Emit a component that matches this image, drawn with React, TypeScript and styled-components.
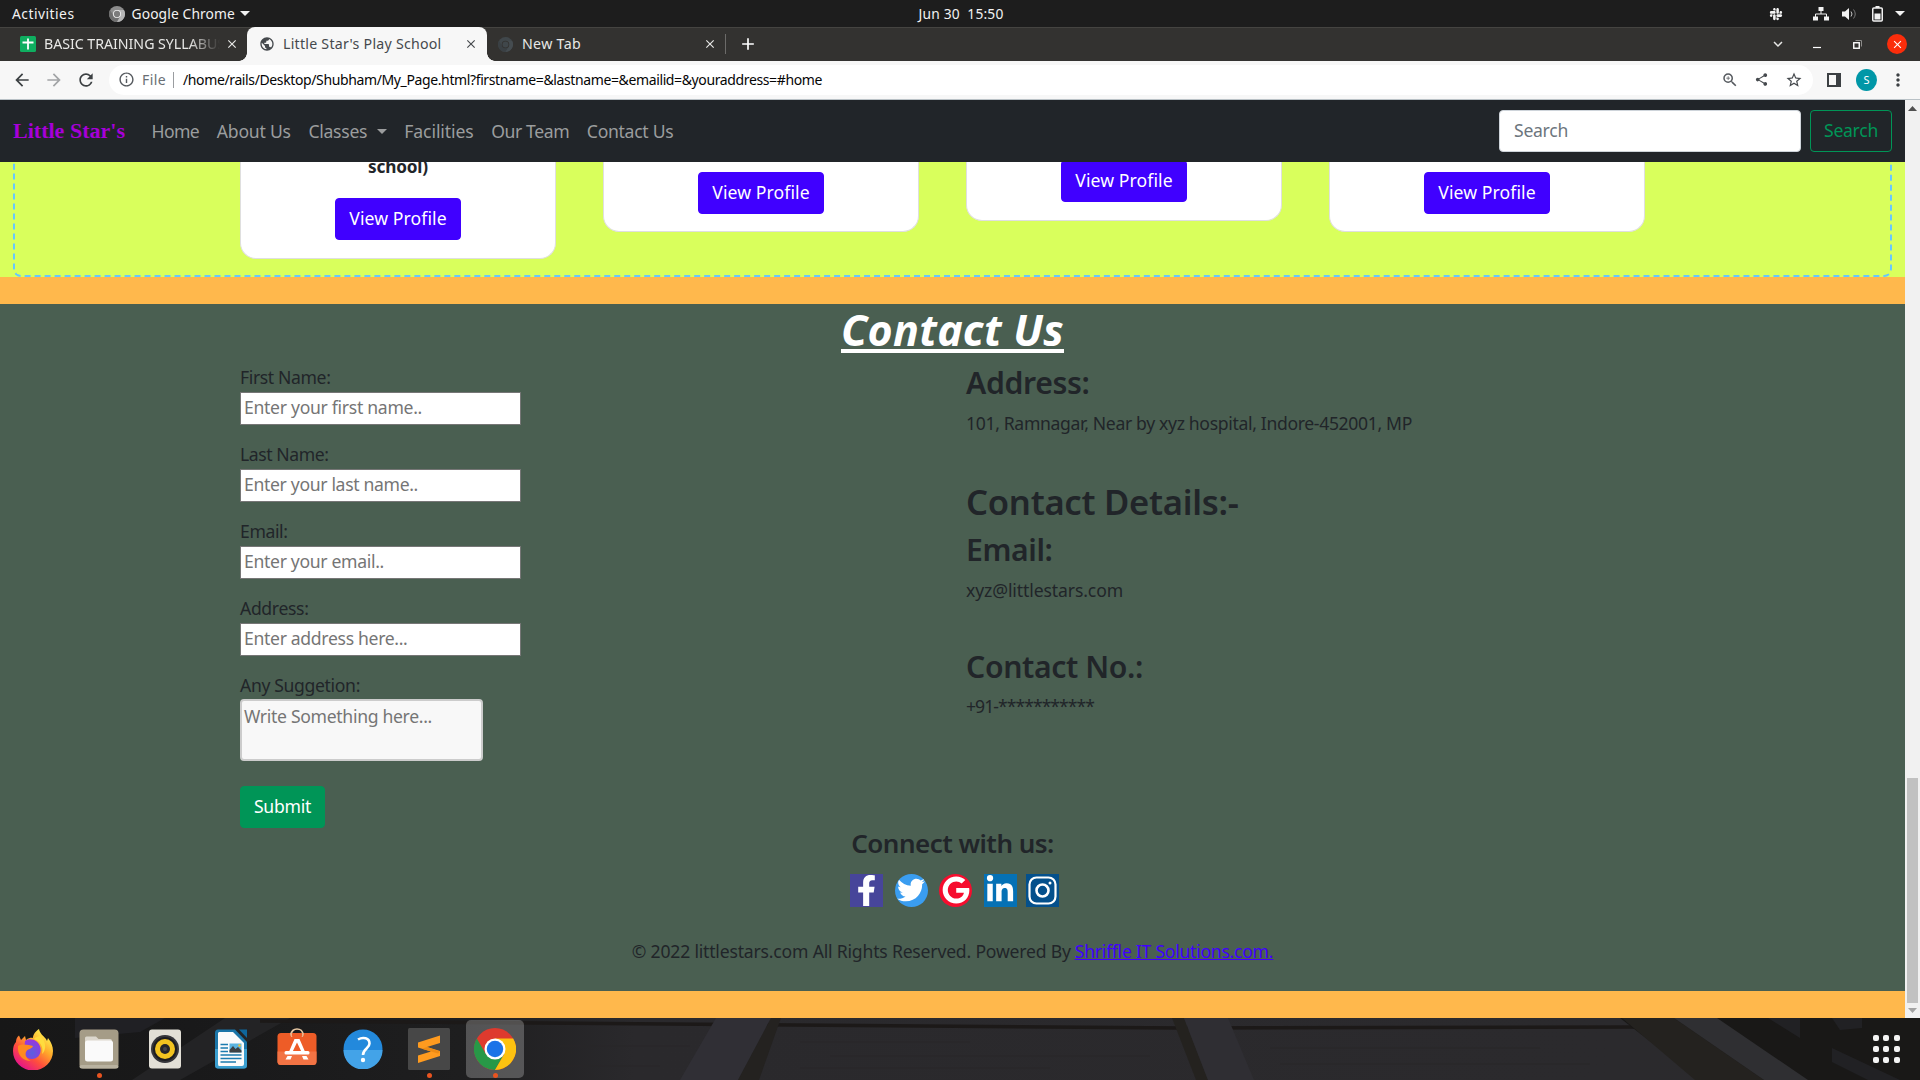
import React from "react";
import styled, { createGlobalStyle, css } from "styled-components";
import { FaFacebookF, FaTwitter, FaGoogle, FaLinkedinIn, FaSlack } from "react-icons/fa";
import { MdArrowBack, MdArrowForward, MdRefresh, MdInfoOutline, MdZoomIn, MdShare, MdStarBorder, MdMoreVert, MdPublic, MdClose, MdAdd, MdExpandMore } from "react-icons/md";

const SANS = '"Noto Sans", "Open Sans", sans-serif';
const SERIF = '"Liberation Serif", serif';

const GlobalStyle = createGlobalStyle`
  *, *::before, *::after { box-sizing: border-box; }
  html, body { margin: 0; padding: 0; overflow: hidden; }
  body { width: 1920px; height: 1080px; font-family: ${SANS}; }
  svg { display: block; flex: none; }
`;

/* ---------- text that keeps a set measure ---------- */

type Face = { size: number; weight?: number; italic?: boolean; family?: string };

const BODY = 17.6;

const pen = document.createElement("canvas").getContext("2d")!;

function tracking(text: string, width: number, { size, weight = 400, italic, family = SANS }: Face) {
  pen.font = `${italic ? "italic " : ""}${weight} ${size}px ${family}`;
  return (width - pen.measureText(text).width) / text.length;
}

const Glyphs = styled.span<{ $face: Face; $track: number }>`
  white-space: pre;
  font-family: ${(p) => p.$face.family ?? SANS};
  font-size: ${(p) => p.$face.size}px;
  font-weight: ${(p) => p.$face.weight ?? 400};
  font-style: ${(p) => (p.$face.italic ? "italic" : "normal")};
  letter-spacing: ${(p) => p.$track.toFixed(3)}px;
`;

function Text({ children, w, ...face }: { children: string; w: number } & Face) {
  return (
    <Glyphs $face={face} $track={tracking(children, w, face)}>
      {children}
    </Glyphs>
  );
}

/* ---------- desktop top bar ---------- */

const Desktop = styled.div`
  display: flex;
  flex-direction: column;
  width: 1920px;
  height: 1080px;
  overflow: hidden;
`;

const TopBar = styled.div`
  display: grid;
  grid-template-columns: 1fr auto 1fr;
  align-items: center;
  height: 27px;
  flex: none;
  padding-left: 2px;
  background: #1d1d1d;
  color: #f2f2f2;
  line-height: 26px;
`;

const TopLeft = styled.div`
  display: flex;
  align-items: center;
  padding-left: 10px;
`;

const TopRight = styled.div`
  display: flex;
  align-items: center;
  justify-content: flex-end;
  padding-right: 15px;
`;

const Push = styled.div<{ $l?: number; $r?: number }>`
  display: flex;
  align-items: center;
  flex: none;
  margin-left: ${(p) => p.$l ?? 0}px;
  margin-right: ${(p) => p.$r ?? 0}px;
`;

const Caret = styled.i<{ $size?: number }>`
  width: 0;
  height: 0;
  border: ${(p) => p.$size ?? 5}px solid transparent;
  border-top-color: currentColor;
  border-bottom: 0;
`;

/* ---------- browser chrome ---------- */

const TabStrip = styled.div`
  display: flex;
  height: 34px;
  flex: none;
  background: #333230;
  box-shadow: inset 0 1px #454441;
  color: #e8e8e6;
  line-height: 32px;
`;

const Tab = styled.div<{ $w: number; $active?: boolean }>`
  display: flex;
  align-items: center;
  flex: none;
  width: ${(p) => p.$w}px;
  ${(p) =>
    p.$active &&
    css`
      position: relative;
      background: #f7f7f7;
      color: #45494d;
      border-radius: 8px 8px 0 0;
      &::before,
      &::after {
        content: "";
        position: absolute;
        bottom: 0;
        width: 8px;
        height: 8px;
      }
      &::before {
        left: -8px;
        background: radial-gradient(circle at 0 0, transparent 7.5px, #f7f7f7 8px);
      }
      &::after {
        right: -8px;
        background: radial-gradient(circle at 100% 0, transparent 7.5px, #f7f7f7 8px);
      }
    `}
`;

const TabTitle = styled.div<{ $faded?: boolean }>`
  height: 34px;
  ${(p) =>
    p.$faded &&
    css`
      width: 176px;
      overflow: hidden;
      mask-image: linear-gradient(90deg, #000 145px, transparent 176px);
    `}
`;

const TabRule = styled.div`
  width: 1px;
  height: 20px;
  background: #6c6b69;
`;

const WindowButtons = styled.div`
  display: flex;
  align-items: center;
  margin-left: auto;
  padding-right: 13px;
`;

const CloseWindow = styled.div`
  display: grid;
  place-items: center;
  width: 20px;
  height: 20px;
  border-radius: 50%;
  background: #fb2d0b;
  color: #fff;
`;

const Toolbar = styled.div`
  display: flex;
  align-items: center;
  height: 39px;
  flex: none;
  padding: 0 12px 1px;
  background: #f7f7f7;
  border-bottom: 1px solid #b9c1c6;
  color: #3c4043;
`;

const Omnibox = styled.div`
  display: flex;
  align-items: center;
  width: 1704px;
  height: 30px;
  margin-left: 13px;
  padding: 0 10px 0 9px;
  border-radius: 15px;
  background: #fff;
  color: #050505;
  line-height: 30px;
`;

const Scheme = styled.span`
  margin-left: 7px;
  color: #6a6f75;
`;

const OmniRule = styled.div`
  width: 1px;
  height: 16px;
  margin: 0 9px 0 7px;
  background: #9a9da0;
`;

const Avatar = styled.div`
  display: grid;
  place-items: center;
  width: 22px;
  height: 22px;
  border-radius: 50%;
  background: #0097a7;
  color: #fff;
  font: 11px/22px ${SANS};
`;

/* ---------- page ---------- */

const Viewport = styled.div`
  display: flex;
  height: 918px;
  flex: none;
`;

const Page = styled.main`
  display: flex;
  flex-direction: column;
  width: 1905px;
  background: #ffb84c;
  color: #212529;
  line-height: 27px;
`;

const NavBar = styled.nav`
  display: flex;
  align-items: center;
  height: 62px;
  flex: none;
  padding: 0 13px;
  background: #212529;
  color: #9b9d9e;
`;

const Brand = styled.a`
  height: 27px;
  margin-right: 26.5px;
  color: #a600d8;
  line-height: 26px;
`;

const NavLink = styled.a`
  display: flex;
  align-items: center;
  gap: 9.5px;
  margin-right: 17.6px;
  line-height: 25px;
`;

const SearchField = styled.input<{ $track: number }>`
  width: 302px;
  height: 42px;
  margin-left: auto;
  padding: 0 13px 2px 14px;
  border: 1px solid #ced4da;
  border-radius: 4px;
  background: #fff;
  font: ${BODY}px ${SANS};
  letter-spacing: ${(p) => p.$track}px;
  &::placeholder {
    color: #6c757d;
    opacity: 1;
  }
`;

const Button = styled.button<{ $w: number; $tone: "blue" | "green" | "outline" }>`
  display: flex;
  align-items: center;
  justify-content: center;
  flex: none;
  width: ${(p) => p.$w}px;
  height: 42px;
  padding: 0 0 2px;
  border: 1px solid ${(p) => (p.$tone === "blue" ? "#4000ff" : "#009557")};
  border-radius: 4px;
  background: ${(p) => ({ blue: "#4000ff", green: "#009557", outline: "transparent" })[p.$tone]};
  color: ${(p) => (p.$tone === "outline" ? "#009557" : "#fff")};
`;

const Team = styled.section`
  height: 115px;
  flex: none;
  padding: 0 13px;
  overflow: hidden;
  background: #d9ff5c;
`;

const TeamFrame = styled.div`
  display: flex;
  gap: 47px;
  height: 315px;
  margin-top: -200px;
  padding: 198px 0 0 225px;
  border: 2px dashed #66c7ff;
  border-radius: 8px;
`;

const ProfileCard = styled.article<{ $h: number; $pad: number }>`
  display: flex;
  flex-direction: column;
  align-items: center;
  justify-content: flex-end;
  flex: none;
  width: 316px;
  height: ${(p) => p.$h}px;
  padding-bottom: ${(p) => p.$pad}px;
  border: 1px solid #dfdfdf;
  border-top: 0;
  border-radius: 0 0 16px 16px;
  background: #fff;
`;

const CardTitle = styled.div`
  height: 26px;
  margin-bottom: 19px;
`;

const Contact = styled.section`
  height: 687px;
  flex: none;
  margin-top: 27px;
  background: #4a5f51;
`;

const Title = styled.h1`
  display: flex;
  justify-content: center;
  height: 60px;
  margin: 0;
  color: #fff;
  line-height: 52px;
  text-decoration: underline;
  text-decoration-thickness: 4px;
  text-underline-offset: 3px;
  text-decoration-skip-ink: none;
`;

const Columns = styled.div`
  display: grid;
  grid-template-columns: 726px 726px;
  height: 463px;
  padding-left: 240px;
`;

const Field = styled.label`
  display: block;
  height: 77px;
`;

const Caption = styled.div`
  height: 28.2px;
`;

const entry = css<{ $track: number }>`
  display: block;
  font: ${BODY}px ${SANS};
  letter-spacing: ${(p) => p.$track}px;
  &::placeholder {
    color: #757575;
    opacity: 1;
  }
`;

const Entry = styled.input<{ $track: number }>`
  ${entry}
  width: 280.5px;
  height: 32.4px;
  padding: 0 3px 2px;
  border: 1px solid #767676;
  background: #fff;
`;

const Notes = styled.textarea<{ $track: number }>`
  ${entry}
  width: 242.7px;
  height: 62px;
  margin: -1px 0 25px;
  padding: 2px;
  border: 2px solid #ccc;
  border-radius: 4px;
  background: #f8f8f8;
  line-height: 27px;
  resize: none;
`;

const Heading = styled.h3<{ $lh: number; $drop?: number }>`
  height: ${(p) => p.$lh}px;
  margin: 0 0 8.8px;
  line-height: ${(p) => p.$lh + (p.$drop ?? 0.6)}px;
`;

const Line = styled.p`
  height: 26.4px;
  margin: 0 0 44px;
`;

const Social = styled.footer`
  display: flex;
  flex-direction: column;
  align-items: center;
`;

const IconRow = styled.div`
  display: flex;
  margin: 6.6px 0 31px 4px;
`;

const Badge = styled.a<{ $bg: string; $round?: boolean; $gap?: number }>`
  display: grid;
  place-items: center;
  width: 33px;
  height: 33px;
  margin-right: ${(p) => p.$gap ?? 11.5}px;
  overflow: hidden;
  border-radius: ${(p) => (p.$round ? "50%" : "0")};
  background: ${(p) => p.$bg};
  color: #fff;
`;

const Credit = styled.p`
  display: flex;
  margin: 0;
`;

const CreditLink = styled.a`
  margin-left: 4px;
  color: #4000ff;
  text-decoration: underline;
`;

const ScrollRail = styled.div`
  display: flex;
  flex-direction: column;
  align-items: center;
  width: 15px;
  padding: 6px 0 5px;
  background: #f1f1f1;
`;

const ScrollThumb = styled.div`
  width: 11px;
  height: 225px;
  margin: auto 0 5px;
  background: #c1c1c1;
`;

/* ---------- dock ---------- */

const DockBar = styled.div`
  position: relative;
  display: flex;
  align-items: center;
  height: 62px;
  flex: none;
  background: #1a1a1b;
`;

const Wallpaper = styled.svg`
  position: absolute;
  inset: 0;
`;

const DockItem = styled.div<{ $active?: boolean; $running?: boolean }>`
  position: relative;
  display: grid;
  place-items: center;
  width: 58px;
  height: 58px;
  margin: 0 4px;
  border-radius: 5px;
  background: ${(p) => (p.$active ? "rgba(255,255,255,.24)" : "none")};
  &::after {
    content: "";
    position: absolute;
    left: 26.5px;
    bottom: 0;
    width: 5px;
    height: 5px;
    border-radius: 50%;
    background: ${(p) => (p.$running ? "#e95420" : "none")};
  }
`;

const Launcher = styled.div`
  position: relative;
  display: grid;
  grid-template-columns: repeat(3, 6px);
  gap: 4.6px;
  margin: 0 20px 0 auto;
`;

const LauncherDot = styled.i`
  width: 6px;
  height: 6px;
  border-radius: 2px;
  background: #f4f4f4;
`;

/* ---------- drawings ---------- */

const ChromeMark = ({ size, gray, dark }: { size: number; gray?: boolean; dark?: boolean }) => {
  const c = dark
    ? ["#40474b", "#3a4044", "#454c50", "#333230", "#40474b"]
    : gray
    ? ["#8d8d8d", "#6f6f6f", "#b5b5b5", "#f0f0f0", "#7c7c7c"]
    : ["#de3a2e", "#279847", "#fcc211", "#ffffff", "#1a73e8"];
  return (
    <svg width={size} height={size} viewBox="0 0 48 48">
      <circle cx="24" cy="24" r="24" fill={c[0]} />
      <path d="M3.2 12A24 24 0 0 0 24 48L34.4 30 24 24 13.6 30Z" fill={c[1]} />
      <path d="M24 48A24 24 0 0 0 44.8 12H24L34.4 30Z" fill={c[2]} />
      <circle cx="24" cy="24" r="12" fill={c[3]} />
      <circle cx="24" cy="24" r="9.4" fill={c[4]} />
    </svg>
  );
};

const Firefox = () => (
  <svg width="40" height="41" viewBox="0 0 40 41">
    <defs>
      <linearGradient id="fx1" x1=".85" y1=".1" x2=".2" y2=".95">
        <stop offset="0" stopColor="#fff44f" />
        <stop offset=".35" stopColor="#ffa72a" />
        <stop offset=".65" stopColor="#ff4f3c" />
        <stop offset="1" stopColor="#e3108f" />
      </linearGradient>
      <radialGradient id="fx2" cx=".5" cy=".7" r=".7">
        <stop offset="0" stopColor="#5b5fe0" />
        <stop offset="1" stopColor="#9a35dc" />
      </radialGradient>
    </defs>
    <path d="M3 13C3 10 4 8 6 6.500L8 11 12 7 13 11C17 8 19 9 20 9 20 5 23 2 26 0 27 5 30 6 33 10L34 12 35 9C38 13 40 17 40 22A20 19.500 0 0 1 0 22C0 18 1 15 3 13Z" fill="url(#fx1)" />
    <path d="M12 12C17 8 26 11 27.500 19 28.500 26 24 30 19 30 14 30 10 26 11 21Z" fill="url(#fx2)" />
    <path d="M5 17C9 14 16 16 20 17 19 20 15 20 13.500 22 11 26 14 30 18 32 10 32 4 26 5 17Z" fill="#ff8a1f" />
    <path d="M21 10C27 12 31 18 29 25 34 21 33 11 27 7 24 8 22 8 21 10Z" fill="#ffdc3e" />
  </svg>
);

const Files = () => (
  <svg width="40" height="40" viewBox="0 0 40 40">
    <rect x=".5" y=".5" width="39" height="39" rx="4" fill="#a59c87" />
    <rect x=".5" y="36" width="39" height="3.500" rx="2" fill="#b9b2a0" />
    <path d="M6 10V9Q6 7.500 7.500 7.500H17L19.500 10H31Q33 10 33 12V16H6Z" fill="#dcd7cd" />
    <rect x="6" y="11.500" width="28" height="21" rx="2.500" fill="#fafafa" />
  </svg>
);

const Rhythmbox = () => (
  <svg width="34" height="40" viewBox="0 0 34 40">
    <rect x="1" y=".5" width="32" height="39" rx="3" fill="#e2dfd6" />
    <circle cx="17" cy="20" r="14" fill="#35353a" />
    <circle cx="17" cy="20" r="12" fill="#1d1d20" />
    <circle cx="17" cy="20" r="10" fill="#f2c320" />
    <circle cx="17" cy="20" r="5" fill="#25252a" />
    <circle cx="17" cy="20" r="2" fill="#45454a" />
  </svg>
);

const Writer = () => (
  <svg width="34" height="40" viewBox="0 0 34 40">
    <path d="M4 .5H21L33 13V36Q33 39.500 30 39.500H4Q1 39.500 1 36V4Q1 .5 4 .5Z" fill="#1b75a8" />
    <path d="M1 20H33V36Q33 39.500 30 39.500H4Q1 39.500 1 36Z" fill="#3b9fd0" />
    <path d="M25 .5H33V9Z" fill="#0f669b" />
    <path d="M5 3H19L30 14V35Q30 37 28 37H5Q4 37 4 35V4Z" fill="#fbfbfb" />
    <path d="M6.500 15.500H14M6.500 19H14M6.500 22.500H14M6.500 26H27.500M6.500 29.500H27.500M6.500 33H22" stroke="#1d7cb0" strokeWidth="1.700" />
    <rect x="15.500" y="14.500" width="12" height="9" fill="#5bb4e0" />
    <path d="M15.500 23.500V21L19 17 21.500 20 24 18 27.500 21.500V23.500Z" fill="#3d4144" />
    <circle cx="25.500" cy="16.500" r="1.200" fill="#f5c02c" />
  </svg>
);

const Software = () => (
  <svg width="40" height="42" viewBox="0 0 40 42">
    <path d="M14 7C14 -1 26 -1 26 7" fill="none" stroke="#e9c9a4" strokeWidth="1.700" />
    <rect x=".5" y="5" width="39" height="32" rx="3.500" fill="#ee5c27" />
    <path d="M.5 23.500H39.500V33.500Q39.500 37 36 37H4Q.5 37 .5 33.500Z" fill="#f27344" />
    <path d="M14 5C14 9 15 8 15 8M26 5C26 9 25 8 25 8" fill="none" stroke="#e9c9a4" strokeWidth="1.500" />
    <path d="M17.500 11H22.500L29 26H25.500L20 14.500 14.500 26H11Z" fill="#fff" />
    <rect x="7.500" y="23" width="25" height="3.600" rx="1.500" fill="#fff" />
    <path d="M10.500 28H15L13.500 31.500H8.500ZM25 28H29.500L31.500 31.500H26.500Z" fill="#fff" />
  </svg>
);

const Help = () => (
  <svg width="40" height="40" viewBox="0 0 40 40">
    <circle cx="20" cy="20" r="19.500" fill="#2389dc" />
    <path d="M.5 21H39.500A19.500 19.500 0 0 1 .5 21Z" fill="#43a3e8" />
    <path d="M15 10.500C20 7.500 26.500 9 26.500 14.500 26.500 19.500 20 19.500 20 26" fill="none" stroke="#fff" strokeWidth="2.600" />
    <circle cx="20" cy="31" r="2.200" fill="#fff" />
  </svg>
);

const Sublime = () => (
  <svg width="42" height="42" viewBox="0 0 42 42">
    <rect width="42" height="42" rx="1.500" fill="#474747" />
    <path d="M10 14.500 32 7.500V15L19 19 32 23V28L10 35V27.500L23 23.500 10 19.500Z" fill="#ff9b1f" />
    <path d="M19 19 32 23.500 30 25.500 14 20.700Z" fill="#ee8b14" />
  </svg>
);

const DockPhoto = () => (
  <Wallpaper width="1920" height="62" viewBox="0 0 1920 62">
    <defs>
      <linearGradient id="wood" x1="0" x2="1">
        <stop offset="0" stopColor="#171717" />
        <stop offset=".1" stopColor="#19191a" />
        <stop offset=".24" stopColor="#1e1e1f" />
        <stop offset=".33" stopColor="#2a292c" />
        <stop offset=".84" stopColor="#2b2a2d" />
        <stop offset="1" stopColor="#2b2a2c" />
      </linearGradient>
    </defs>
    <rect width="1920" height="62" fill="url(#wood)" />
    <path d="M75 0H165L140 14 75 20Z" fill="#202024" />
    <path d="M225 0H290L180 62H132Z" fill="#232325" />
    <path d="M260 3 540 5 1180 10 1640 9" fill="none" stroke="#1c1918" strokeWidth="3.500" />
    <path d="M800 24H970M830 38H1150M800 50H1050M1270 30H1540M1280 46H1590M560 28H690M550 48H660" stroke="#282729" />
    <path d="M716 0H771L738 62H680Z" fill="#302f35" />
    <path d="M771 0H781L759 62H738Z" fill="#242220" />
    <path d="M1172 0H1184L1208 62H1196Z" fill="#24221f" />
    <path d="M1184 0H1228L1254 62H1208Z" fill="#2f2e33" />
    <path d="M1620 0H1920V62H1700Z" fill="#191817" />
    <path d="M1622 0H1674L1764 62H1695Z" fill="#24221f" />
    <path d="M1674 0H1717L1808 62H1764Z" fill="#2f2f32" />
    <path d="M1768 0H1800V20ZM1832 0H1862V10L1840 12ZM1832 30 1900 62H1868L1832 44Z" fill="#212124" />
  </Wallpaper>
);

/* ---------- data ---------- */

const fields: [string, number, string, number][] = [
  ["First Name:", 90.5, "Enter your first name..", 178],
  ["Last Name:", 88.5, "Enter your last name..", 174],
  ["Email:", 47.5, "Enter your email..", 140],
  ["Address:", 68.5, "Enter address here...", 163.5],
];

const navLinks: [string, number][] = [
  ["Home", 47.7],
  ["About Us", 74],
  ["Classes", 58.8],
  ["Facilities", 69.3],
  ["Our Team", 78],
  ["Contact Us", 86.5],
];

/* [card bottom edge, space under the button] */
const cards: [number, number][] = [
  [259, 17.6],
  [232, 17],
  [221, 17.6],
  [232, 17],
];

const NOTE = "Write Something here...";

export default function App() {
  return (
    <Desktop>
      <GlobalStyle />
      <TopBar>
        <TopLeft>
          <Text size={13.8} w={62.500}>Activities</Text>
          <Push $l={34} $r={7}><ChromeMark size={16} gray /></Push>
          <Text size={13.8} w={103.500}>Google Chrome</Text>
          <Push $l={5}><Caret /></Push>
        </TopLeft>
        <Text size={13.8} w={85}>Jun 30  15:50</Text>
        <TopRight>
          <FaSlack size={14} />
          <Push $l={30}>
            <svg width="16" height="14" viewBox="0 0 16 14" fill="#f2f2f2">
              <path d="M5.500 0h5v4h-5zM0 9.500h5v4H0zM11 9.500h5v4h-5z" />
              <path d="M8 4v3M2.500 10V7h11v3" fill="none" stroke="#f2f2f2" />
            </svg>
          </Push>
          <Push $l={13}>
            <svg width="15" height="14" viewBox="0 0 15 14">
              <path d="M0 4.500h3L7 1v12L3 9.500H0z" fill="#f2f2f2" />
              <path d="M9 4.500q2 2.500 0 5" fill="none" stroke="#c8c8c8" />
              <path d="M11.500 2.500q3.500 4.500 0 9" fill="none" stroke="#777" />
            </svg>
          </Push>
          <Push $l={15}>
            <svg width="11" height="16" viewBox="0 0 11 16">
              <path d="M3.500 1h4" stroke="#f2f2f2" strokeWidth="2" />
              <rect x=".75" y="2" width="9.500" height="13" rx="1" fill="none" stroke="#f2f2f2" strokeWidth="1.500" />
              <rect x="2.500" y="7.500" width="6" height="6" fill="#f2f2f2" />
            </svg>
          </Push>
          <Push $l={12}><Caret /></Push>
        </TopRight>
      </TopBar>

      <TabStrip>
        <Tab $w={247}>
          <Push $l={20} $r={8}>
            <svg width="16" height="16" viewBox="0 0 16 16">
              <rect width="16" height="16" rx="1.500" fill="#0fae60" />
              <path d="M8 2.500v11M2.500 6.500h11" stroke="#fff" strokeWidth="1.800" />
            </svg>
          </Push>
          <TabTitle $faded><Text size={14.2} w={181}>BASIC TRAINING SYLLABUS</Text></TabTitle>
          <Push $l={5}><MdClose size={14} /></Push>
        </Tab>
        <Tab $w={240} $active>
          <Push $l={12} $r={8}><MdPublic size={16} /></Push>
          <TabTitle><Text size={14.2} w={158.500}>Little Star's Play School</Text></TabTitle>
          <Push $l={22}><MdClose size={14} /></Push>
        </Tab>
        <Tab $w={238}>
          <Push $l={11} $r={9}><ChromeMark size={15} dark /></Push>
          <TabTitle><Text size={14.2} w={59}>New Tab</Text></TabTitle>
          <Push $l={122}><MdClose size={14} /></Push>
        </Tab>
        <Push><TabRule /></Push>
        <Push $l={12}><MdAdd size={20} color="#fff" /></Push>
        <WindowButtons>
          <MdExpandMore size={18} />
          <Push $l={26}>
            <svg width="8" height="10"><path d="M0 8.500h8" stroke="#fff" strokeWidth="1.200" /></svg>
          </Push>
          <Push $l={32}>
            <svg width="9" height="9" fill="none">
              <path d="M2.500 .5h6v6" stroke="#8d8c8a" />
              <rect x=".75" y="2.750" width="5.500" height="5.500" stroke="#fff" strokeWidth="1.400" />
            </svg>
          </Push>
          <Push $l={25}><CloseWindow><MdClose size={13} /></CloseWindow></Push>
        </WindowButtons>
      </TabStrip>

      <Toolbar>
        <MdArrowBack size={20} />
        <Push $l={12}><MdArrowForward size={20} color="#a2a4a6" /></Push>
        <Push $l={12}><MdRefresh size={20} /></Push>
        <Omnibox>
          <MdInfoOutline size={17} color="#55595e" />
          <Scheme><Text size={14} w={24}>File</Text></Scheme>
          <OmniRule />
          <Text size={14} w={639}>
            {"/home/rails/Desktop/Shubham/My_Page.html?firstname=&lastname=&emailid=&youraddress=#home"}
          </Text>
          <Push $l={899}><MdZoomIn size={18} color="#55595e" /></Push>
          <Push $l={15}><MdShare size={15} color="#45494d" /></Push>
          <Push $l={16}><MdStarBorder size={18} color="#45494d" /></Push>
        </Omnibox>
        <Push $l={14} $r={15}>
          <svg width="14" height="14">
            <path d="M0 0h14v14H0zM2 2v10h7V2z" fill="#3c4043" fillRule="evenodd" />
          </svg>
        </Push>
        <Avatar>S</Avatar>
        <Push $l={11}><MdMoreVert size={20} /></Push>
      </Toolbar>

      <Viewport>
        <Page>
          <NavBar>
            <Brand><Text size={22} weight={700} family={SERIF} w={112}>Little Star's</Text></Brand>
            {navLinks.map(([label, w]) => (
              <NavLink key={label}>
                <Text size={BODY} w={w}>{label}</Text>
                {label === "Classes" && <Caret />}
              </NavLink>
            ))}
            <SearchField placeholder="Search" $track={tracking("Search", 54, { size: BODY })} />
            <Push $l={9}>
              <Button $w={82} $tone="outline"><Text size={BODY} w={54}>Search</Text></Button>
            </Push>
          </NavBar>

          <Team>
            <TeamFrame>
              {cards.map(([bottom, pad], i) => (
                <ProfileCard key={i} $h={bottom - 162} $pad={pad}>
                  {i === 0 && <CardTitle><Text size={17.2} weight={700} w={60}>school)</Text></CardTitle>}
                  <Button $w={126} $tone="blue"><Text size={BODY} w={97.500}>View Profile</Text></Button>
                </ProfileCard>
              ))}
            </TeamFrame>
          </Team>

          <Contact>
            <Title><Text size={43} weight={700} italic w={223}>Contact Us</Text></Title>
            <Columns>
              <form>
                {fields.map(([label, w, hint, hw]) => (
                  <Field key={label}>
                    <Caption><Text size={BODY} w={w}>{label}</Text></Caption>
                    <Entry placeholder={hint} $track={tracking(hint, hw, { size: BODY })} />
                  </Field>
                ))}
                <Caption><Text size={BODY} w={120}>Any Suggetion:</Text></Caption>
                <Notes placeholder={NOTE} $track={tracking(NOTE, 188, { size: BODY })} />
                <Button type="button" $w={85} $tone="green"><Text size={BODY} w={57}>Submit</Text></Button>
              </form>
              <div>
                <Heading $lh={37}><Text size={30.200} weight={600} w={123.500}>Address:</Text></Heading>
                <Line><Text size={BODY} w={446}>101, Ramnagar, Near by xyz hospital, Indore-452001, MP</Text></Line>
                <Heading $lh={42.200} $drop={2}><Text size={34.600} weight={600} w={272.500}>Contact Details:-</Text></Heading>
                <Heading $lh={37}><Text size={30.200} weight={600} w={86.500}>Email:</Text></Heading>
                <Line><Text size={BODY} w={157}>xyz@littlestars.com</Text></Line>
                <Heading $lh={37} $drop={2}><Text size={30.200} weight={600} w={177}>Contact No.:</Text></Heading>
                <Line><Text size={BODY} w={128}>+91-***********</Text></Line>
              </div>
            </Columns>
            <Social>
              <Heading $lh={31.600}><Text size={26} weight={600} w={202.500}>Connect with us:</Text></Heading>
              <IconRow>
                <Badge $bg="#47459a"><FaFacebookF size={31} /></Badge>
                <Badge $bg="#3a9df0" $round><FaTwitter size={28} /></Badge>
                <Badge $bg="#f60d2e" $round><FaGoogle size={28} /></Badge>
                <Badge $bg="#0571b5" $gap={9}><FaLinkedinIn size={30} /></Badge>
                <Badge $bg="#04508c" $gap={0}>
                  <svg width="29" height="29" viewBox="0 0 29 29" fill="none" stroke="#fff">
                    <rect x="1.500" y="1.500" width="26" height="26" rx="7" strokeWidth="2.200" />
                    <circle cx="14.500" cy="14.500" r="6" strokeWidth="2.600" />
                    <circle cx="22" cy="7" r="1.500" fill="#fff" stroke="none" />
                  </svg>
                </Badge>
              </IconRow>
              <Credit>
                <Text size={BODY} w={439}>© 2022 littlestars.com All Rights Reserved. Powered By</Text>
                <CreditLink><Text size={BODY} w={198.500}>Shriffle IT Solutions.com.</Text></CreditLink>
              </Credit>
            </Social>
          </Contact>
        </Page>
        <ScrollRail>
          <svg width="9" height="5"><path d="M0 5 4.500 0 9 5z" fill="#505050" /></svg>
          <ScrollThumb />
          <svg width="9" height="5"><path d="M0 0 4.500 5 9 0z" fill="#a3a3a3" /></svg>
        </ScrollRail>
      </Viewport>

      <DockBar>
        <DockPhoto />
        <DockItem><Firefox /></DockItem>
        <DockItem $running><Files /></DockItem>
        <DockItem><Rhythmbox /></DockItem>
        <DockItem><Writer /></DockItem>
        <DockItem><Software /></DockItem>
        <DockItem><Help /></DockItem>
        <DockItem $running><Sublime /></DockItem>
        <DockItem $active $running><ChromeMark size={42} /></DockItem>
        <Launcher>
          {Array.from({ length: 9 }, (_, i) => <LauncherDot key={i} />)}
        </Launcher>
      </DockBar>
    </Desktop>
  );
}
